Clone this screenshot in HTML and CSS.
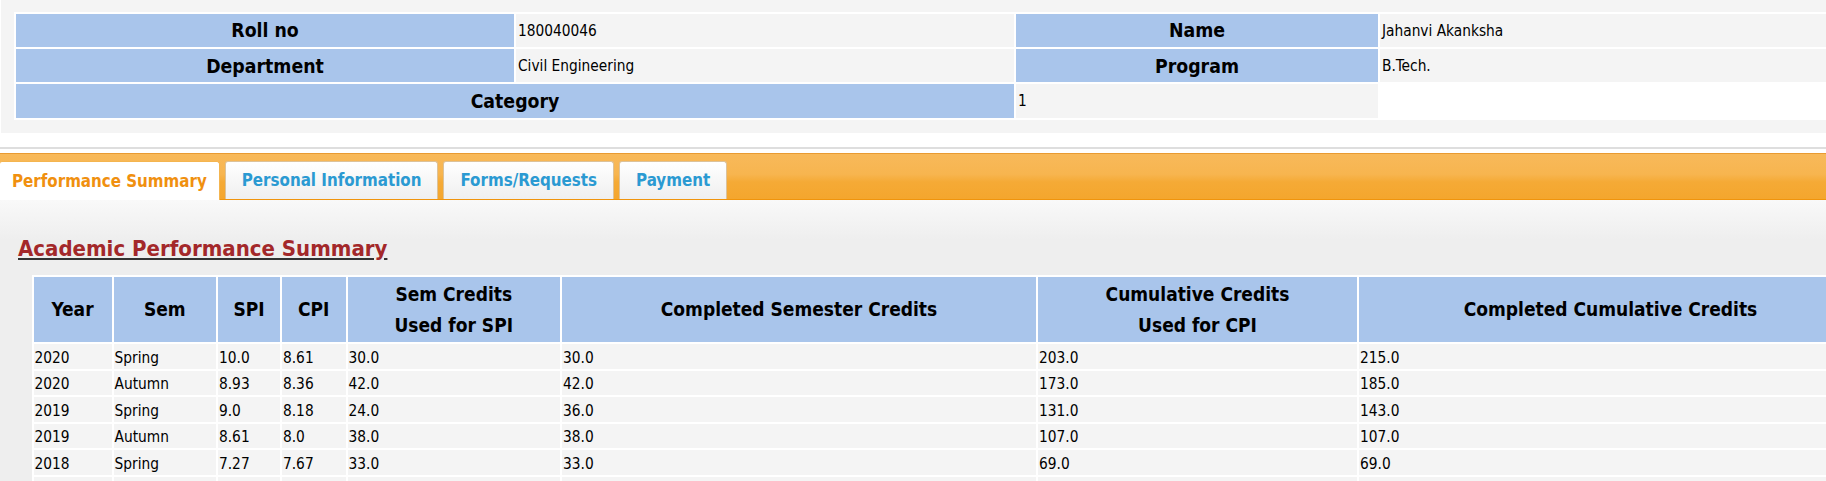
FILE: index.html
```html
<!DOCTYPE html>
<html lang="en">
<head>
<meta charset="utf-8">
<title>Academic Performance Summary</title>
<link rel="stylesheet" href="styles.css">
</head>
<body>
<div class="info">
  <table class="info-table">
    <colgroup><col class="ic1"><col class="ic2"><col class="ic3"><col class="ic4"></colgroup>
    <tr><th>Roll no</th><td>180040046</td><th>Name</th><td>Jahanvi Akanksha</td></tr>
    <tr><th>Department</th><td>Civil Engineering</td><th>Program</th><td>B.Tech.</td></tr>
    <tr><th colspan="2">Category</th><td>1</td></tr>
  </table>
</div>
<div class="sep"></div>
<div class="tabbar">
  <a class="tab active">Performance Summary</a>
  <a class="tab">Personal Information</a>
  <a class="tab">Forms/Requests</a>
  <a class="tab">Payment</a>
</div>
<div class="content">
  <h2 class="title"><u>Academic Performance Summary</u></h2>
  <table class="perf">
    <colgroup><col class="pc1"><col class="pc2"><col class="pc3"><col class="pc4"><col class="pc5"><col class="pc6"><col class="pc7"><col class="pc8"></colgroup>
    <tr><th>Year</th><th>Sem</th><th>SPI</th><th>CPI</th><th>Sem Credits<br>Used for SPI</th><th>Completed Semester Credits</th><th>Cumulative Credits<br>Used for CPI</th><th>Completed Cumulative Credits</th></tr>
    <tr><td>2020</td><td>Spring</td><td>10.0</td><td>8.61</td><td>30.0</td><td>30.0</td><td>203.0</td><td>215.0</td></tr>
    <tr><td>2020</td><td>Autumn</td><td>8.93</td><td>8.36</td><td>42.0</td><td>42.0</td><td>173.0</td><td>185.0</td></tr>
    <tr><td>2019</td><td>Spring</td><td>9.0</td><td>8.18</td><td>24.0</td><td>36.0</td><td>131.0</td><td>143.0</td></tr>
    <tr><td>2019</td><td>Autumn</td><td>8.61</td><td>8.0</td><td>38.0</td><td>38.0</td><td>107.0</td><td>107.0</td></tr>
    <tr><td>2018</td><td>Spring</td><td>7.27</td><td>7.67</td><td>33.0</td><td>33.0</td><td>69.0</td><td>69.0</td></tr>
    <tr><td></td><td></td><td></td><td></td><td></td><td></td><td></td><td></td></tr>
  </table>
</div>
</body>
</html>
```
FILE: styles.css
```css
html, body {
  margin: 0;
  padding: 0;
  overflow: hidden;
  background: #ffffff;
}
body {
  font-family: "DejaVu Sans Condensed", "DejaVu Sans", sans-serif;
  color: #000;
}

/* ---------- student info ---------- */
.info {
  margin-left: 1px;
  padding: 11.5px 0 13.5px 13px;
  background: #f4f4f4;
}
.info-table {
  table-layout: fixed;
  width: 1814px;
  border-spacing: 2px;
  background: #ffffff;
}
.ic1, .ic2 { width: 498px; }
.ic3 { width: 362px; }
.ic4 { width: 446px; }
.info-table th {
  height: 32.4px;
  padding: 1px 0 0 0;
  background: #a9c5eb;
  font-size: 19.3px;
  font-weight: bold;
  text-align: center;
  vertical-align: middle;
}
.info-table td {
  height: 32.4px;
  padding: 1px 0 0 2px;
  background: #f4f4f4;
  font-size: 15.3px;
  vertical-align: middle;
}

.sep {
  margin-top: 14px;
  height: 4px;
  border-top: 2px solid #dedede;
}

/* ---------- tabs ---------- */
.tabbar {
  display: flex;
  align-items: flex-end;
  gap: 5px;
  height: 44.5px;
  border-top: 1px solid #e99b32;
  border-bottom: 1px solid #f0940c;
  background: linear-gradient(#f8b95a 0%, #f7b54f 45%, #f5aa36 62%, #f4a62d 100%);
}
.tab {
  box-sizing: border-box;
  height: 38px;
  padding: 0 16px;
  display: flex;
  align-items: center;
  border: 1px solid #dcc29a;
  border-bottom: none;
  border-radius: 3px 3px 0 0;
  background: linear-gradient(#ffffff, #efefef);
  color: #2b9ad2;
  font-size: 16.8px;
  font-weight: bold;
  text-decoration: none;
}
.tab.active {
  height: 39px;
  margin-bottom: -1px;
  margin-left: -1px;
  padding: 0 12px;
  border-color: #f4b550;
  background: #ffffff;
  color: #f0900f;
}

/* ---------- performance ---------- */
.content {
  padding: 36.5px 0 0 18px;
  background: linear-gradient(#f9f9f9 0px, #eeeeee 40px, #eeeeee 100%);
}
.title {
  margin: 0 0 13.5px 0;
  font-size: 22px;
  font-weight: bold;
  color: #a3282a;
}
.title u {
  text-decoration-color: #333333;
}
.perf {
  margin-left: 13.5px;
  table-layout: fixed;
  width: 1832.5px;
  border-spacing: 2px;
  background: #ffffff;
}
.pc1 { width: 78px; }
.pc2 { width: 102.5px; }
.pc3 { width: 62px; }
.pc4 { width: 63.5px; }
.pc5 { width: 212.5px; }
.pc6 { width: 474px; }
.pc7 { width: 319px; }
.pc8 { width: 503px; }
.perf th {
  height: 65.7px;
  padding: 0;
  background: #a9c5eb;
  font-size: 19px;
  font-weight: bold;
  line-height: 31px;
  text-align: center;
  vertical-align: middle;
}
.perf td {
  height: 22.5px;
  padding: 2px 0 0 1px;
  background: #f4f4f4;
  font-size: 15.3px;
  vertical-align: middle;
}
```
